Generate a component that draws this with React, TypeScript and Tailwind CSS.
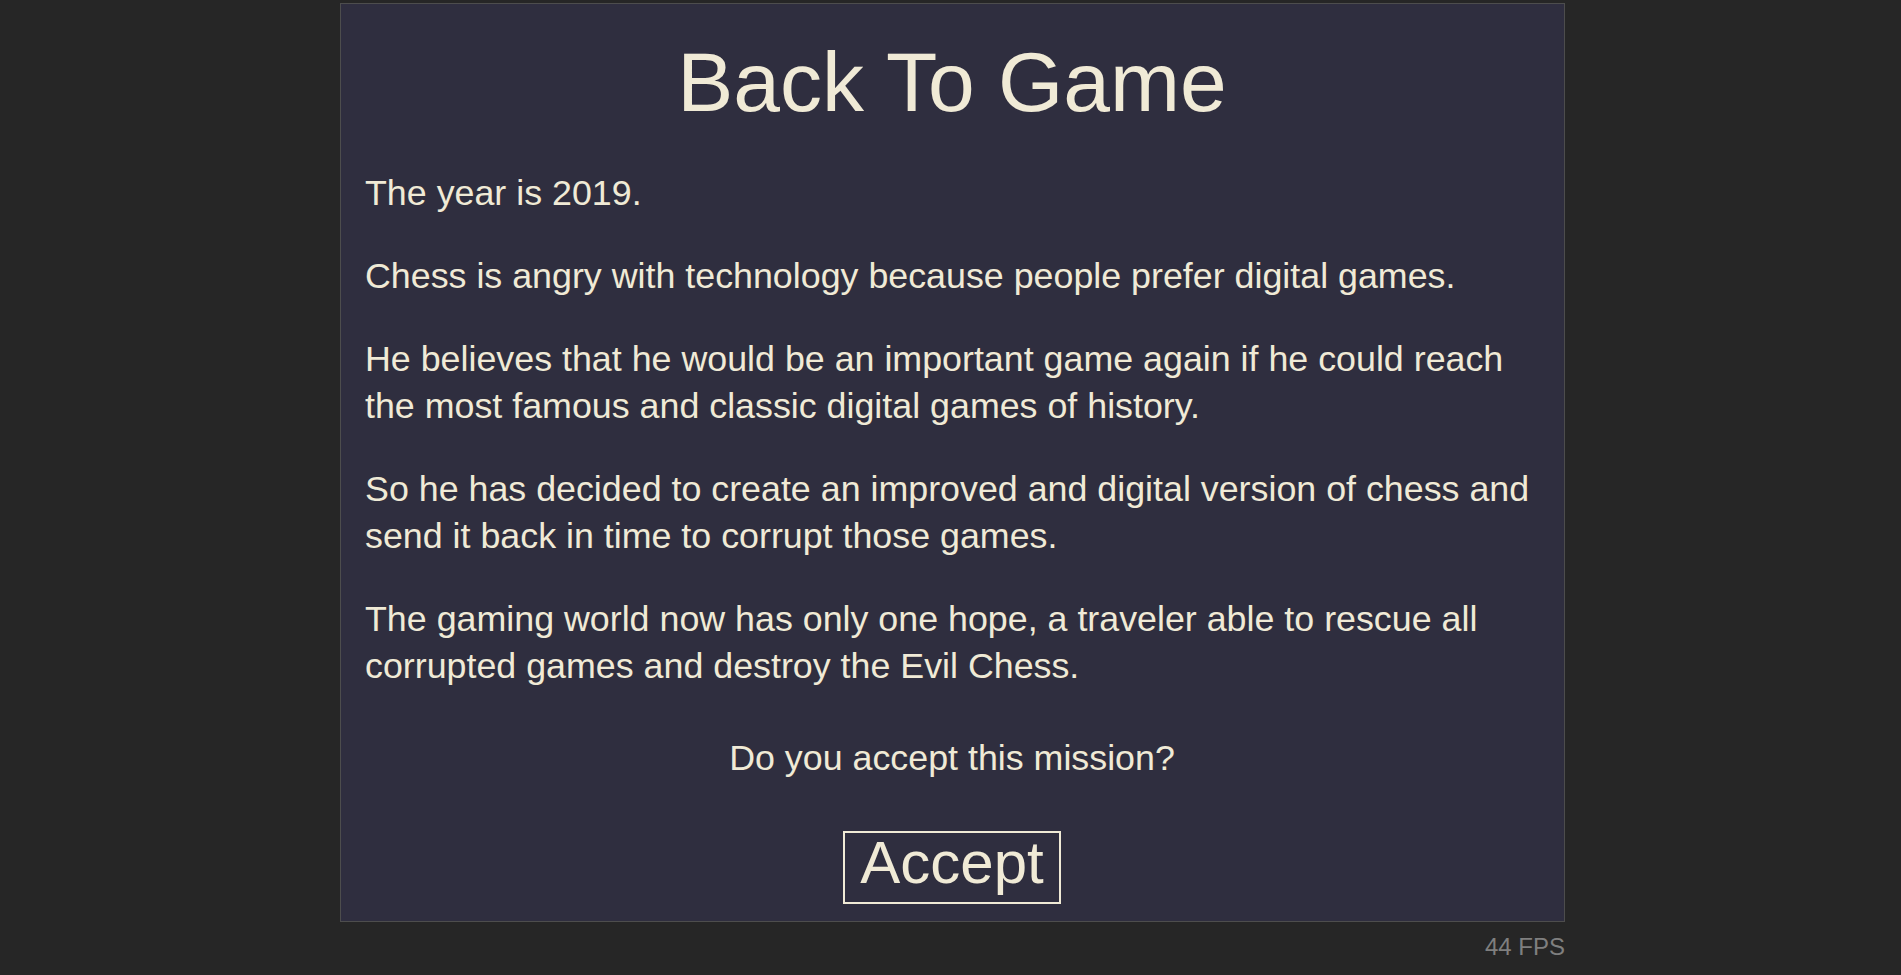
import React from 'react';

const paragraphs = [
  'The year is 2019.',
  'Chess is angry with technology because people prefer digital games.',
  'He believes that he would be an important game again if he could reach the most famous and classic digital games of history.',
  'So he has decided to create an improved and digital version of chess and send it back in time to corrupt those games.',
  'The gaming world now has only one hope, a traveler able to rescue all corrupted games and destroy the Evil Chess.',
];

const App: React.FC = () => {
  return (
    <div className="min-h-[975px] bg-[#262626] pt-[3px] font-['Liberation_Sans',Arial,sans-serif]">
      <div className="ml-[340px] w-[1225px]">
        {/* Story panel */}
        <div className="h-[919px] border border-[#4d4d4d] bg-[#2f2e3f] pl-[24px] pr-[25px] pt-[32px] text-[#f0ead6]">
          <h1 className="text-center text-[84px] leading-[92px]">Back To Game</h1>
          <div className="mt-[42px] flex flex-col gap-[36px]">
            {paragraphs.map((text, i) => (
              <p key={i} className="text-[35.8px] leading-[47px]">{text}</p>
            ))}
          </div>
          <p className="mt-[45px] text-center text-[35.8px] leading-[47px]">Do you accept this mission?</p>
          <div className="mt-[49px] flex justify-center">
            <button className="border-2 border-[#f0ead6] px-[15px] pb-[9px] text-[60px] leading-[60px] text-[#f0ead6]">
              Accept
            </button>
          </div>
        </div>
        <div className="mt-[11px] text-right text-[24px] leading-[28px] text-[#7f7f7f]">44 FPS</div>
      </div>
    </div>
  );
};

export default App;
